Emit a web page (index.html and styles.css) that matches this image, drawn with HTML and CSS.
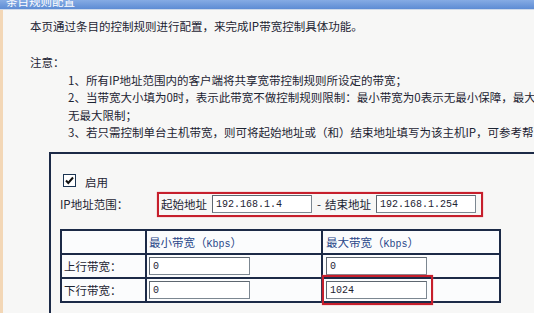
FILE: index.html
```html
<!DOCTYPE html>
<html lang="zh-CN">
  <head>
    <meta charset="UTF-8">
    <title>条目规则配置</title>
    <link rel="stylesheet" href="styles.css">
  </head>
  <body>
    <div class="titlebar"><span class="title-text">条目规则配置</span></div>
    <div class="page">
      <p class="intro">本页通过条目的控制规则进行配置，来完成IP带宽控制具体功能。</p>
      <p class="note-head">注意：</p>
      <div class="notes">
        <div>1、所有IP地址范围内的客户端将共享宽带控制规则所设定的带宽；</div>
        <div>2、当带宽大小填为0时，表示此带宽不做控制规则限制：最小带宽为0表示无最小保障，最大带</div>
        <div>无最大限制；</div>
        <div>3、若只需控制单台主机带宽，则可将起始地址或（和）结束地址填写为该主机IP，可参考帮</div>
      </div>

      <div class="panel">
        <label class="enable-row">
          <span class="checkbox">
            <svg width="11" height="11" viewBox="0 0 11 11"><path d="M2 5.5 L4.3 8 L9 2.5" fill="none" stroke="#111" stroke-width="2"/></svg>
          </span>
          <span>启用</span>
        </label>

        <div class="range-row">
          <span class="range-label">IP地址范围：</span>
          <span class="mark range-box">
            <span>起始地址</span>
            <input class="field ip" type="text" value="192.168.1.4">
            <span class="dash">-</span>
            <span>结束地址</span>
            <input class="field ip" type="text" value="192.168.1.254">
          </span>
        </div>

        <table class="bw-table">
          <tr class="head">
            <td class="c1"></td>
            <td class="c2">最小带宽（<span class="unit">Kbps</span>）</td>
            <td class="c3">最大带宽（<span class="unit">Kbps</span>）</td>
          </tr>
          <tr>
            <td class="c1">上行带宽：</td>
            <td class="c2"><input class="field bw" type="text" value="0"></td>
            <td class="c3"><input class="field bw" type="text" value="0"></td>
          </tr>
          <tr>
            <td class="c1">下行带宽：</td>
            <td class="c2"><input class="field bw" type="text" value="0"></td>
            <td class="c3 marked"><input class="field bw" type="text" value="1024"><span class="mark cell-mark"></span></td>
          </tr>
        </table>
      </div>
    </div>
  </body>
</html>
```

FILE: styles.css
```css
:root {
  font-family: "Noto Sans CJK SC", "DejaVu Sans", sans-serif;
  font-size: 11.5px;
  color: #1d2433;
}

body {
  margin: 0;
  width: 534px;
  height: 313px;
  overflow: hidden;
  background-color: #f7f7f6;
}

.titlebar {
  height: 9px;
  overflow: hidden;
  padding-left: 6px;
  background: linear-gradient(#86abe4, #5d8cd4);
  border-bottom: 1px solid #cfdaea;
}
.title-text {
  display: block;
  margin-top: -5px;
  line-height: 12px;
  font-size: 11.5px;
  color: #fff;
}

.page {
  border-left: 3px solid #f3d7b6;
  padding-left: 27px;
  height: 303px;
  overflow: hidden;
  white-space: nowrap;
}
.page p {
  margin: 0;
}
.intro {
  padding-top: 8px;
  line-height: 17.5px;
}
.note-head {
  margin-top: 18.5px !important;
  line-height: 17.5px;
}
.notes {
  padding-left: 38px;
  line-height: 17.5px;
}

.panel {
  margin-top: 10px;
  margin-left: 19px;
  width: 474px;
  height: 140px;
  border-top: 2px solid #1c2a47;
  border-left: 2px solid #1c2a47;
  padding: 20px 0 0 9px;
}

.enable-row {
  display: flex;
  align-items: center;
  gap: 9px;
  padding-left: 3px;
  height: 14px;
  line-height: 14px;
}
.enable-row span:last-child {
  margin-top: 2px;
}
.checkbox {
  width: 11px;
  height: 11px;
  border: 1px solid #1c3553;
  background: #fff;
  display: flex;
}

.range-row {
  display: flex;
  align-items: center;
  margin-top: 4px;
}
.range-label {
  width: 97px;
}
.mark {
  border: 2px solid #c61f2c;
  box-shadow: 0 0 1px #e36a70;
}
.range-box {
  display: flex;
  align-items: center;
  height: 21px;
  padding: 0 5px 0 2px;
  gap: 5px;
}
.dash {
  margin-right: -1px;
}

.field {
  box-sizing: border-box;
  height: 18px;
  margin: 0;
  padding: 0 0 0 3px;
  border: 1px solid #7c8791;
  border-top-color: #5e6770;
  border-left-color: #5e6770;
  background: #fff;
  font-family: "Liberation Mono", monospace;
  font-size: 10px;
  color: #1d2433;
  outline: none;
}
.ip {
  width: 100px;
}
.bw {
  width: 101px;
}

.bw-table {
  margin-top: 12px;
  border-collapse: collapse;
  border: 2px solid #1c2a47;
  background-color: #fbfcfd;
}
.bw-table td {
  border: 2px solid #1c2a47;
  padding: 0 0 0 2px;
  height: 22px;
  vertical-align: middle;
}
.bw-table .c1 {
  width: 81px;
}
.bw-table .c2 {
  width: 172px;
}
.bw-table .c3 {
  width: 173px;
  padding-left: 3px;
}
.head td {
  color: #2a4789;
}
.unit {
  font-family: "Liberation Mono", monospace;
  font-size: 10px;
}

.marked {
  position: relative;
}
.cell-mark {
  position: absolute;
  left: -1px;
  top: -4px;
  width: 107px;
  height: 26px;
}
```
